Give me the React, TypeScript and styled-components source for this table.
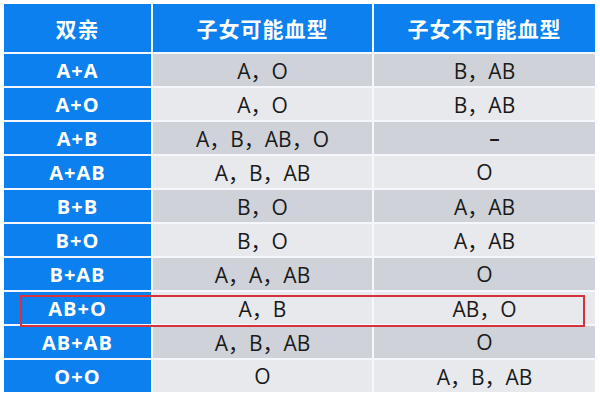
import React from 'react';
import styled, { createGlobalStyle } from 'styled-components';

const GlobalStyle = createGlobalStyle`
  html, body {
    margin: 0;
    padding: 0;
    background: #ffffff;
  }
  body {
    font-family: "Open Sans", "Noto Sans CJK SC", sans-serif;
  }
`;

const Page = styled.div`
  width: 600px;
  height: 400px;
  padding: 4px 5px 0 4px;
  box-sizing: border-box;
`;

const Table = styled.div`
  display: grid;
  grid-template-columns: 147px 219px 221px;
  grid-template-rows: 48px repeat(10, 32px);
  gap: 2px;
  background: #f4f7fb;
`;

const HeadCell = styled.div`
  background: #0b80ee;
  color: #ffffff;
  font-family: "Noto Sans CJK SC", sans-serif;
  font-size: 21px;
  font-weight: 700;
  letter-spacing: 1px;
  display: flex;
  align-items: center;
  justify-content: center;
`;

const ParentCell = styled.div`
  position: relative;
  background: #0b80ee;
  color: #ffffff;
  font-size: 20px;
  font-weight: 700;
  letter-spacing: 1px;
  display: flex;
  align-items: center;
  justify-content: center;
`;

const DataCell = styled.div<{ $shade: boolean }>`
  background: ${(p) => (p.$shade ? '#cfd2d8' : '#e8e9ed')};
  color: #1a1a1a;
  font-size: 21px;
  display: flex;
  align-items: center;
  justify-content: center;
`;

const Dash = styled.span`
  margin-left: 20px;
  font-weight: 600;
`;

const Highlight = styled.div`
  position: absolute;
  left: 16px;
  top: 3px;
  width: 561px;
  height: 28px;
  border: 2px solid #d7323c;
  pointer-events: none;
  z-index: 2;
`;

const rows = [
  { parents: 'A+A', can: 'A，O', cannot: 'B，AB' },
  { parents: 'A+O', can: 'A，O', cannot: 'B，AB' },
  { parents: 'A+B', can: 'A，B，AB，O', cannot: '' },
  { parents: 'A+AB', can: 'A，B，AB', cannot: 'O' },
  { parents: 'B+B', can: 'B，O', cannot: 'A，AB' },
  { parents: 'B+O', can: 'B，O', cannot: 'A，AB' },
  { parents: 'B+AB', can: 'A，A，AB', cannot: 'O' },
  { parents: 'AB+O', can: 'A，B', cannot: 'AB，O', marked: true },
  { parents: 'AB+AB', can: 'A，B，AB', cannot: 'O' },
  { parents: 'O+O', can: 'O', cannot: 'A，B，AB' },
];

const App: React.FC = () => {
  return (
    <>
      <GlobalStyle />
      <Page>
        <Table>
          <HeadCell>双亲</HeadCell>
          <HeadCell>子女可能血型</HeadCell>
          <HeadCell>子女不可能血型</HeadCell>
          {rows.map((row, i) => (
            <React.Fragment key={row.parents}>
              <ParentCell>
                {row.parents}
                {row.marked && <Highlight />}
              </ParentCell>
              <DataCell $shade={i % 2 === 0}>{row.can}</DataCell>
              <DataCell $shade={i % 2 === 0}>
                {row.cannot || <Dash>–</Dash>}
              </DataCell>
            </React.Fragment>
          ))}
        </Table>
      </Page>
    </>
  );
};

export default App;
